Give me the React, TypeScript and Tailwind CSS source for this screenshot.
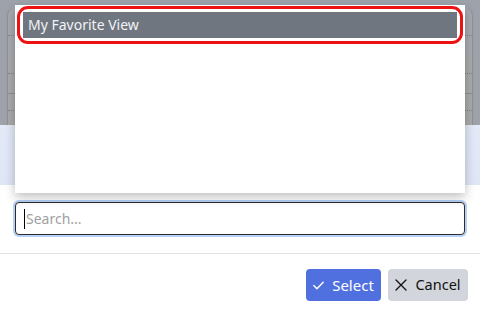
import React from "react";

function CheckIcon() {
  return (
    <svg width="11" height="9" viewBox="0 0 11 9" fill="none">
      <path d="M0.8 4.6 L3.9 7.7 L10.2 1.2" stroke="white" strokeWidth="1.4" strokeLinecap="round" strokeLinejoin="round" />
    </svg>
  );
}

function XIcon() {
  return (
    <svg width="12" height="12" viewBox="0 0 12 12" fill="none">
      <path d="M1 1 L11 11 M11 1 L1 11" stroke="#111" strokeWidth="1.3" strokeLinecap="round" />
    </svg>
  );
}

function DotRow() {
  return <div className="h-0 border-t border-dotted border-[#7f8288]" />;
}

export default function App() {
  return (
    <div
      className="relative w-[480px] h-[311px] overflow-hidden bg-white"
      style={{ fontFamily: '"Noto Sans", "Open Sans", sans-serif' }}
    >
      {/* dimmed page behind */}
      <div className="flex flex-col h-[125px] bg-[#9ea2ab] pt-[8px] px-[7px]">
        <div className="flex flex-col flex-1 rounded-t-[8px] bg-[#a6a9b1] border-x border-[#8f9299]">
          <div className="h-[27px]" />
          <DotRow />
          <div className="h-[19px]" />
          <div className="flex flex-col flex-1 bg-[#a9a9a9]">
            <div className="h-[18px]" />
            <DotRow />
            <div className="h-[19px]" />
            <div className="h-0 border-t border-[#909090]" />
            <div className="h-[16px]" />
            <DotRow />
          </div>
        </div>
      </div>
      <div className="h-[60px] bg-gradient-to-b from-[#e3e9f7] to-[#dfe6f5]" />

      {/* dialog body */}
      <div className="flex flex-col">
        <div className="px-[15px] pt-[17px]">
          <div className="h-[33px] rounded-[4px] border border-[#2b2b2b] ring-2 ring-[#b5d1f8] flex items-center pl-[8px] bg-white">
            <span className="w-px h-[20px] bg-black mr-[1px]" />
            <span className="text-[14px] text-[#a0a0a0]">Search...</span>
          </div>
        </div>
        <div className="mt-[18px] h-px bg-[#e3e3e3]" />
        <div className="flex justify-end gap-[7px] pt-[15px] pr-[12px]">
          <button className="h-[32px] w-[75px] rounded-[4px] bg-[#5170e0] text-white flex items-center justify-center gap-[8px] text-[15px]">
            <CheckIcon />
            <span>Select</span>
          </button>
          <button className="h-[32px] w-[80px] rounded-[4px] bg-[#d2d5db] text-[#111] flex items-center justify-center gap-[8px] text-[14.5px]">
            <XIcon />
            <span>Cancel</span>
          </button>
        </div>
      </div>

      {/* dropdown popup overlay */}
      <div className="absolute left-[15px] top-[5px] w-[450px] h-[188px] bg-white shadow-[0_4px_10px_rgba(0,0,0,0.25)]">
        <div className="mx-[2px] mt-[1px] rounded-[11px] border-[3px] border-[#ee1111] px-[3px] py-[3px]">
          <div className="h-[26px] bg-[#6f7680] flex items-center pl-[5px] pb-[1px] text-[14px] text-[#f2f3f5]">
            My Favorite View
          </div>
        </div>
      </div>
    </div>
  );
}
